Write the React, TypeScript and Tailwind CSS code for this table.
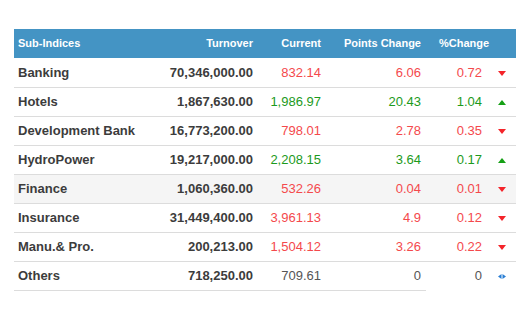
type Trend = "down" | "up" | "flat";

const ROWS: Array<{
  name: string;
  turnover: string;
  current: string;
  points: string;
  pct: string;
  trend: Trend;
  highlight?: boolean;
}> = [
  { name: "Banking", turnover: "70,346,000.00", current: "832.14", points: "6.06", pct: "0.72", trend: "down" },
  { name: "Hotels", turnover: "1,867,630.00", current: "1,986.97", points: "20.43", pct: "1.04", trend: "up" },
  { name: "Development Bank", turnover: "16,773,200.00", current: "798.01", points: "2.78", pct: "0.35", trend: "down" },
  { name: "HydroPower", turnover: "19,217,000.00", current: "2,208.15", points: "3.64", pct: "0.17", trend: "up" },
  { name: "Finance", turnover: "1,060,360.00", current: "532.26", points: "0.04", pct: "0.01", trend: "down", highlight: true },
  { name: "Insurance", turnover: "31,449,400.00", current: "3,961.13", points: "4.9", pct: "0.12", trend: "down" },
  { name: "Manu.& Pro.", turnover: "200,213.00", current: "1,504.12", points: "3.26", pct: "0.22", trend: "down" },
  { name: "Others", turnover: "718,250.00", current: "709.61", points: "0", pct: "0", trend: "flat" },
];

const tone: Record<Trend, string> = {
  down: "text-[#f4494c]",
  up: "text-[#1c9a1c]",
  flat: "text-[#555]",
};

function Arrow({ trend }: { trend: Trend }) {
  if (trend === "down")
    return (
      <svg width="8" height="5" viewBox="0 0 8 5" className="inline-block">
        <path d="M0 0h8L4 5z" fill="#f4242a" />
      </svg>
    );
  if (trend === "up")
    return (
      <svg width="8" height="5" viewBox="0 0 8 5" className="inline-block">
        <path d="M0 5h8L4 0z" fill="#15a015" />
      </svg>
    );
  return (
    <svg width="8" height="5" viewBox="0 0 8 5" className="inline-block">
      <path d="M0 2.5L3.5 0v5zM8 2.5L4.5 0v5z" fill="#2a7fd4" />
    </svg>
  );
}

export default function App() {
  return (
    <div className="w-[523px] h-[309px] bg-white pt-[29px] pl-[14px] font-['Liberation_Sans',Arial,sans-serif]">
      <table className="w-[502px] table-fixed border-collapse text-[13px]">
        <colgroup>
          <col className="w-[150px]" />
          <col className="w-[94px]" />
          <col className="w-[68px]" />
          <col className="w-[100px]" />
          <col className="w-[61px]" />
          <col className="w-[29px]" />
        </colgroup>
        <thead>
          <tr className="h-[29px] bg-[#4494c4] text-[11px] font-bold text-white">
            <th className="pl-[4px] text-left">Sub-Indices</th>
            <th className="pr-[5px] text-right">Turnover</th>
            <th className="pr-[5px] text-right">Current</th>
            <th className="pr-[5px] text-right">Points Change</th>
            <th colSpan={2} className="pl-[13px] text-left">%Change</th>
          </tr>
        </thead>
        <tbody>
          {ROWS.map((r) => (
            <tr key={r.name} className={`h-[29px] ${r.highlight ? "bg-[#f5f5f5]" : ""}`}>
              <td className="border-b border-[#dcdcdc] pl-[4px] font-bold text-[#3c3c3c]">{r.name}</td>
              <td className="border-b border-[#dcdcdc] pr-[5px] text-right font-bold text-[#3c3c3c]">{r.turnover}</td>
              <td className={`border-b border-[#dcdcdc] pr-[5px] text-right ${tone[r.trend]}`}>{r.current}</td>
              <td className={`border-b border-[#dcdcdc] pr-[5px] text-right ${tone[r.trend]}`}>{r.points}</td>
              <td className={`${r.trend === "flat" ? "" : "border-b border-[#dcdcdc]"} pr-[5px] text-right ${tone[r.trend]}`}>
                {r.pct}
              </td>
              <td className={`${r.trend === "flat" ? "" : "border-b border-[#dcdcdc]"} text-center`}>
                <Arrow trend={r.trend} />
              </td>
            </tr>
          ))}
        </tbody>
      </table>
    </div>
  );
}
